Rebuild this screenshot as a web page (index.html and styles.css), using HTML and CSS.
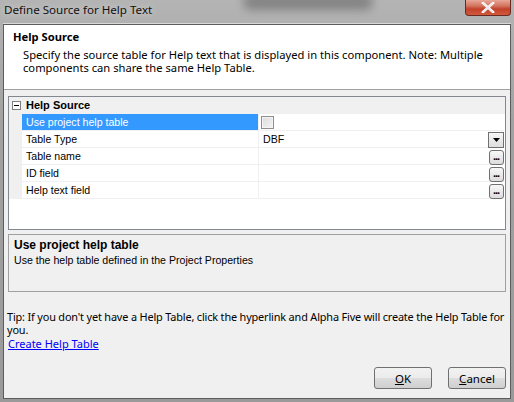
FILE: index.html
```html
<!DOCTYPE html>
<html>
<head>
<meta charset="utf-8">
<link rel="stylesheet" href="styles.css">
</head>
<body>
<div class="window">
  <div class="titlebar">
    <span class="title">Define Source for Help Text</span>
    <div class="blur"></div>
    <div class="close"><svg width="14" height="11" viewBox="0 0 14 11"><path d="M2 1 L12 10 M12 1 L2 10" stroke="#fff" stroke-width="2.6" stroke-linecap="square"/><path d="M2 1 L12 10 M12 1 L2 10" stroke="#e8e8ee" stroke-width="1.2"/></svg></div>
  </div>
  <div class="client">
    <div class="header">
      <div class="h-title">Help Source</div>
      <div class="h-desc">Specify the source table for Help text that is displayed in this component. Note: Multiple components can share the same Help Table.</div>
    </div>
    <div class="grid">
      <div class="cat">
        <span class="minus"><svg width="9" height="9" viewBox="0 0 9 9"><rect x="0.5" y="0.5" width="8" height="8" fill="#fff" stroke="#808080"/><path d="M2 4.5 H7" stroke="#000"/></svg></span>
        <span class="cat-label">Help Source</span>
      </div>
      <div class="row selected">
        <div class="gutter"></div>
        <div class="label">Use project help table</div>
        <div class="value"><span class="check"></span></div>
      </div>
      <div class="row">
        <div class="gutter"></div>
        <div class="label">Table Type</div>
        <div class="value"><span class="val-text">DBF</span><span class="dd"><svg width="7" height="4" viewBox="0 0 7 4"><path d="M0 0 H7 L3.5 4 Z" fill="#000"/></svg></span></div>
      </div>
      <div class="row">
        <div class="gutter"></div>
        <div class="label">Table name</div>
        <div class="value"><span class="ell">...</span></div>
      </div>
      <div class="row">
        <div class="gutter"></div>
        <div class="label">ID field</div>
        <div class="value"><span class="ell">...</span></div>
      </div>
      <div class="row">
        <div class="gutter"></div>
        <div class="label">Help text field</div>
        <div class="value"><span class="ell">...</span></div>
      </div>
    </div>
    <div class="descpanel">
      <div class="d-title">Use project help table</div>
      <div class="d-text">Use the help table defined in the Project Properties</div>
    </div>
    <div class="tip">Tip: If you don't yet have a Help Table, click the hyperlink and Alpha Five will create the Help Table for you.</div>
    <a class="link" href="#">Create Help Table</a>
    <div class="buttons">
      <button class="btn"><u>O</u>K</button>
      <button class="btn"><u>C</u>ancel</button>
    </div>
  </div>
</div>
</body>
</html>
```
FILE: styles.css
```css
* { box-sizing: border-box; }
html, body { margin: 0; padding: 0; }
body { width: 514px; height: 402px; overflow: hidden; background: #9c9c9c; }

.window {
  width: 514px; height: 402px;
  position: relative;
  display: flex; flex-direction: column;
  background: linear-gradient(180deg, #b4b4b4 0%, #a2a2a2 30%, #9a9a9a 100%);
  padding: 0 3px 3px 3px;
}

.titlebar {
  height: 24px;
  flex: none;
  position: relative;
  padding-left: 1px;
  border-bottom: 1px solid #d8d8d8;
}
.title {
  position: relative; z-index: 2;
  font-family: "Noto Sans", sans-serif;
  font-size: 11.6px; line-height: 20px;
  color: #111;
  display: inline-block;
  text-shadow: 0 0 6px rgba(255,255,255,0.6);
}
.blur {
  position: absolute; left: 240px; top: -6px; width: 130px; height: 16px;
  background: #6f6f6f; filter: blur(5px); opacity: 0.7;
  border-radius: 8px;
}
.close {
  position: absolute; top: 0; right: 0px; width: 46px; height: 16px;
  background: linear-gradient(180deg, #e8a898 0%, #d2735e 40%, #c2412a 60%, #d25a3c 100%);
  border: 1px solid #6a2a22; border-top: none;
  border-radius: 0 0 4px 4px;
  display: flex; align-items: center; justify-content: center;
  z-index: 3;
}

.client {
  flex: 1;
  background: #f0f0f0;
  border: 1px solid #5c5c5c;
  display: flex; flex-direction: column;
  font-family: "Liberation Sans", Arial, sans-serif;
  font-size: 10.6px;
  color: #000;
}

.header {
  background: #fff;
  height: 65px;
  border-bottom: 1px solid #a0a0a0;
  padding: 3px 8px 0 9px;
  font-family: "Noto Sans", sans-serif;
  font-size: 11.2px;
}
.h-title { font-weight: bold; line-height: 18px; }
.h-desc { padding-left: 10px; line-height: 13px; padding-top: 2px; }

.grid {
  margin: 6px 4px 0 4px;
  height: 134px;
  border: 1px solid #828790;
  background: #fff;
  display: flex; flex-direction: column;
}
.cat {
  height: 17px;
  background: #f0f0f0;
  display: flex; align-items: center;
  padding-left: 3px;
}
.minus { width: 9px; height: 9px; display: flex; margin-right: 5px; }
.cat-label { font-weight: bold; font-size: 11px; line-height: 17px; }

.row {
  height: 17px;
  display: flex;
  border-bottom: 1px solid #f0f0f0;
  margin-right: 1px;
}
.gutter { width: 13px; background: #f0f0f0; flex: none; }
.label {
  width: 237px; flex: none;
  border-right: 1px solid #f0f0f0;
  padding-left: 4px;
  line-height: 16px;
  white-space: nowrap;
}
.row.selected .label { background: #3399ff; color: #fff; }
.value {
  flex: 1;
  display: flex; align-items: center;
  padding-left: 2px;
  position: relative;
}
.val-text { padding-left: 2px; color: #000; flex: 1; line-height: 16px; }
.check {
  width: 13px; height: 13px;
  border: 1px solid #8f8f8f;
  background: linear-gradient(135deg, #dcdcdc, #f4f4f4);
  box-shadow: inset 0 0 0 1px #f4f4f4;
}
.dd {
  width: 16px; height: 16px;
  border: 1px solid #707070;
  background: linear-gradient(180deg, #f6f6f6, #dedede);
  display: flex; align-items: center; justify-content: center;
  margin-top: 2px;
  margin-left: auto;
}
.ell {
  margin-left: auto;
  width: 15px; height: 15px;
  border: 1px solid #707070;
  border-radius: 3px;
  background: linear-gradient(180deg, #f8f8f8, #dcdcdc);
  font-weight: bold; font-size: 11px;
  line-height: 10px;
  text-align: center;
  letter-spacing: -1px;
  text-indent: -1px;
  margin-top: 2px;
}

.descpanel {
  margin: 4px 4px 0 4px;
  height: 58px;
  border: 1px solid #a0a0a0;
  padding: 3px 5px;
}
.d-title { font-weight: bold; font-size: 12px; line-height: 15px; }
.d-text { line-height: 15px; }

.tip {
  margin-top: 18px;
  padding-left: 3px;
  padding-right: 0;
  font-family: "Noto Sans", sans-serif;
  font-size: 10.9px;
  letter-spacing: -0.16px;
  line-height: 13px;
}
.link {
  margin-left: 4px;
  margin-top: 1px;
  font-family: "Noto Sans", sans-serif;
  font-size: 11px;
  line-height: 14px;
  color: #0000ff;
  align-self: flex-start;
}

.buttons {
  margin-top: auto;
  display: flex; justify-content: flex-end;
  gap: 16px;
  padding: 0 4px 9px 0;
}
.btn {
  width: 58px; height: 22px;
  border: 1px solid #707070;
  border-radius: 3px;
  background: linear-gradient(180deg, #f2f2f2 0%, #ebebeb 50%, #dddddd 51%, #cfcfcf 100%);
  font-family: "Noto Sans", sans-serif;
  font-size: 11.5px;
  color: #000;
  padding: 0;
}
```
